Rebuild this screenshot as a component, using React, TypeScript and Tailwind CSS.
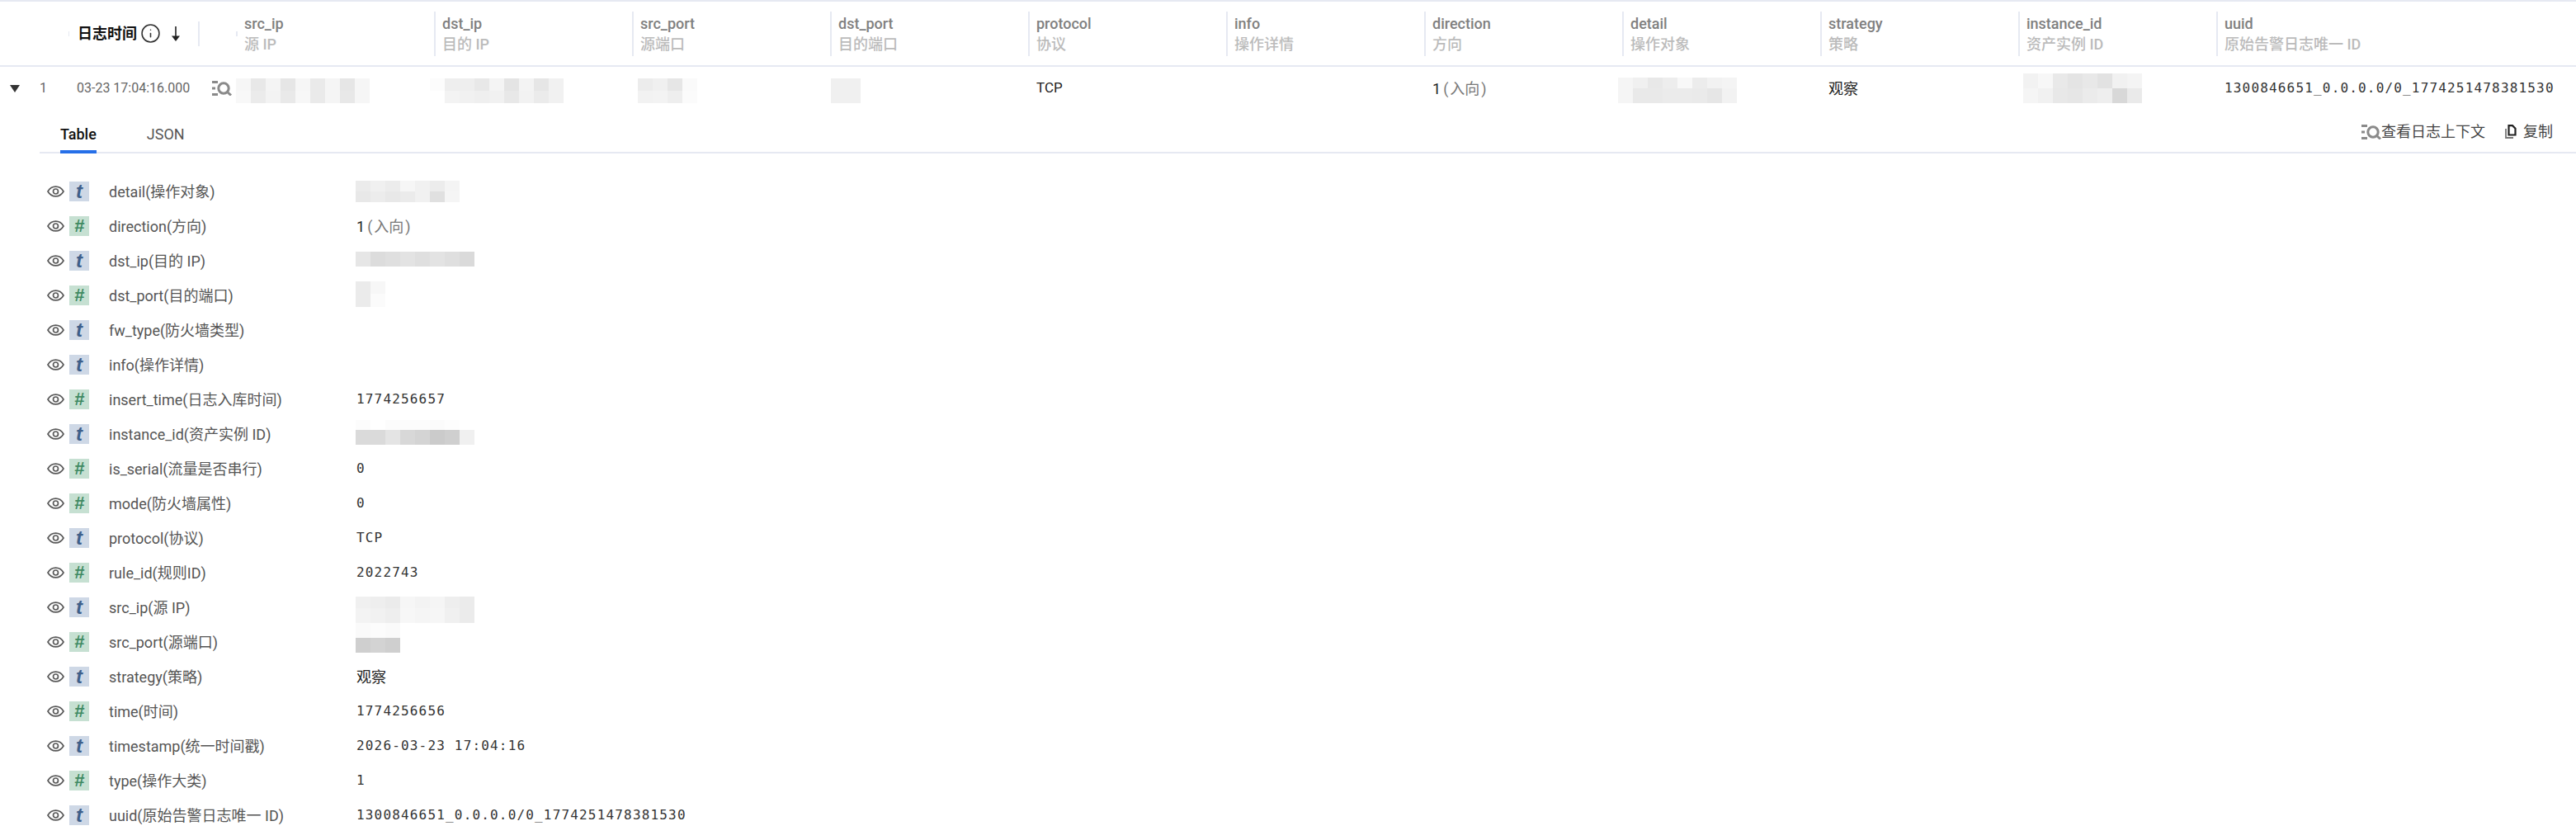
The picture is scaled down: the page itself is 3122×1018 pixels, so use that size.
import React from "react";
import { Info } from "lucide-react";

type MosaicRow = { h: number; c: string[] };

const columns = [
  { name: "src_ip", sub: "源 IP" },
  { name: "dst_ip", sub: "目的 IP" },
  { name: "src_port", sub: "源端口" },
  { name: "dst_port", sub: "目的端口" },
  { name: "protocol", sub: "协议" },
  { name: "info", sub: "操作详情" },
  { name: "direction", sub: "方向" },
  { name: "detail", sub: "操作对象" },
  { name: "strategy", sub: "策略" },
  { name: "instance_id", sub: "资产实例 ID" },
  { name: "uuid", sub: "原始告警日志唯一 ID" },
];

const rowMosaics: Record<string, { x: number; y: number; rows: MosaicRow[] }> = {
  src_ip: {
    x: 0,
    y: 14,
    rows: [
      { h: 15, c: ["#f6f6f6", "#e8e8e8", "#f4f4f4", "#e6e6e6", "#f6f6f6", "#eaeaea", "#f5f5f5", "#e6e6e6", "#f6f6f6"] },
      { h: 15, c: ["#f8f8f8", "#ebebeb", "#f3f3f3", "#e9e9e9", "#f7f7f7", "#eaeaea", "#f5f5f5", "#e8e8e8", "#f6f6f6"] },
    ],
  },
  dst_ip: {
    x: -5,
    y: 14,
    rows: [
      { h: 15, c: ["#fcfcfc", "#eeeeee", "#eeeeee", "#e8e8e8", "#f4f4f4", "#e4e4e4", "#f3f3f3", "#e6e6e6", "#f1f1f1"] },
      { h: 15, c: ["#ffffff", "#f3f3f3", "#f1f1f1", "#efefef", "#f1f1f1", "#e8e8e8", "#f2f2f2", "#ebebeb", "#f1f1f1"] },
    ],
  },
  src_port: {
    x: 7,
    y: 14,
    rows: [
      { h: 15, c: ["#ececec", "#f0f0f0", "#e6e6e6", "#fafafa"] },
      { h: 15, c: ["#f2f2f2", "#f3f3f3", "#eeeeee", "#fbfbfb"] },
    ],
  },
  dst_port: {
    x: 1,
    y: 14,
    rows: [{ h: 30, c: ["#f0f0f0", "#f0f0f0"] }],
  },
  detail: {
    x: -5,
    y: 13,
    rows: [
      { h: 13, c: ["#f5f5f5", "#f0f0f0", "#e8e8e8", "#ededed", "#f8f8f8", "#ececec", "#f2f2f2", "#f4f4f4"] },
      { h: 18, c: ["#f5f5f5", "#e9e9e9", "#e9e9e9", "#ebebeb", "#ebebeb", "#eaeaea", "#e6e6e6", "#f2f2f2"] },
    ],
  },
  instance_id: {
    x: 6,
    y: 8,
    rows: [
      { h: 18, c: ["#f2f2f2", "#f7f7f7", "#e9e9e9", "#e4e4e4", "#e8e8e8", "#e2e2e2", "#f1f1f1", "#f4f4f4"] },
      { h: 18, c: ["#f5f5f5", "#f1f1f1", "#e8e8e8", "#e6e6e6", "#ebebeb", "#eeeeee", "#d8d8d8", "#eaeaea"] },
    ],
  },
};

const rowValues: Record<string, React.ReactNode> = {
  protocol: <span className="text-[17px] text-[#222222]">TCP</span>,
  direction: <DirectionValue />,
  strategy: <span className="text-[18px] text-[#222222]">观察</span>,
  uuid: <span className="text-[16px] tracking-[1.17px] text-[#333333] [font-family:'DejaVu_Sans_Mono',monospace]">1300846651_0.0.0.0/0_1774251478381530</span>,
};

const fields: { name: string; kind: "t" | "#"; value?: string; mosaic?: { y: number; rows: MosaicRow[] } }[] = [
  {
    name: "detail(操作对象)",
    kind: "t",
    mosaic: {
      y: 8,
      rows: [
        { h: 13, c: ["#ebebeb", "#f0f0f0", "#ececec", "#f6f6f6", "#f1f1f1", "#ececec", "#f4f4f4"] },
        { h: 13, c: ["#e8e8e8", "#ececec", "#e8e8e8", "#ebebeb", "#f1f1f1", "#e0e0e0", "#f5f5f5"] },
      ],
    },
  },
  { name: "direction(方向)", kind: "#", value: "direction" },
  {
    name: "dst_ip(目的 IP)",
    kind: "t",
    mosaic: { y: 10, rows: [{ h: 18, c: ["#e6e6e6", "#dcdcdc", "#dfdfdf", "#e3e3e3", "#dfdfdf", "#e3e3e3", "#dfdfdf", "#dadada"] }] },
  },
  {
    name: "dst_port(目的端口)",
    kind: "#",
    mosaic: {
      y: 4,
      rows: [
        { h: 15, c: ["#ebebeb", "#f7f7f7"] },
        { h: 16, c: ["#ebebeb", "#fbfbfb"] },
      ],
    },
  },
  { name: "fw_type(防火墙类型)", kind: "t" },
  { name: "info(操作详情)", kind: "t" },
  { name: "insert_time(日志入库时间)", kind: "#", value: "1774256657" },
  {
    name: "instance_id(资产实例 ID)",
    kind: "t",
    mosaic: {
      y: 4,
      rows: [
        { h: 12, c: ["#fcfcfc", "#ffffff", "#fcfcfc", "#fcfcfc", "#fcfcfc", "#fbfbfb", "#fdfdfd", "#ffffff"] },
        { h: 18, c: ["#dadada", "#dadada", "#e4e4e4", "#d8d8d8", "#d4d4d4", "#cbcbcb", "#cfcfcf", "#f0f0f0"] },
      ],
    },
  },
  { name: "is_serial(流量是否串行)", kind: "#", value: "0" },
  { name: "mode(防火墙属性)", kind: "#", value: "0" },
  { name: "protocol(协议)", kind: "t", value: "TCP" },
  { name: "rule_id(规则ID)", kind: "#", value: "2022743" },
  {
    name: "src_ip(源 IP)",
    kind: "t",
    mosaic: {
      y: 8,
      rows: [
        { h: 14, c: ["#f0f0f0", "#eeeeee", "#ebebeb", "#f6f6f6", "#f3f3f3", "#f5f5f5", "#eeeeee", "#ebebeb"] },
        { h: 18, c: ["#f3f3f3", "#f1f1f1", "#eeeeee", "#f7f7f7", "#f5f5f5", "#f6f6f6", "#f0f0f0", "#ebebeb"] },
      ],
    },
  },
  {
    name: "src_port(源端口)",
    kind: "#",
    mosaic: {
      y: -2,
      rows: [
        { h: 18, c: ["#fafafa", "#fcfcfc", "#fafafa"] },
        { h: 18, c: ["#cfcfcf", "#d3d3d3", "#cfcfcf"] },
      ],
    },
  },
  { name: "strategy(策略)", kind: "t", value: "观察" },
  { name: "time(时间)", kind: "#", value: "1774256656" },
  { name: "timestamp(统一时间戳)", kind: "t", value: "2026-03-23 17:04:16" },
  { name: "type(操作大类)", kind: "#", value: "1" },
  { name: "uuid(原始告警日志唯一 ID)", kind: "t", value: "1300846651_0.0.0.0/0_1774251478381530" },
];

function DirectionValue() {
  return (
    <span className="text-[18px] text-[#222222]">
      1
      <span className="ml-[3px] text-[#777777]">(</span>
      <span className="mx-[2px] text-[#777777]">入向</span>
      <span className="text-[#777777]">)</span>
    </span>
  );
}

function Mosaic({ rows, x = 0, y = 0 }: { rows: MosaicRow[]; x?: number; y?: number }) {
  return (
    <div className="flex flex-col shrink-0" style={{ marginLeft: x, marginTop: y }}>
      {rows.map((r, i) => (
        <div key={i} className="flex" style={{ height: r.h }}>
          {r.c.map((c, j) => (
            <div key={j} className="w-[18px] h-full" style={{ backgroundColor: c }} />
          ))}
        </div>
      ))}
    </div>
  );
}

function ContextIcon({ className }: { className?: string }) {
  return (
    <svg className={className} viewBox="0 0 24 18" fill="none">
      <path d="M0 1.500h7M0 9h4M0 16.500h7" stroke="#8a8a8a" strokeWidth="3" />
      <circle cx="14" cy="9" r="6.200" stroke="#8a8a8a" strokeWidth="3" />
      <path d="M18.500 13.500l4.500 4" stroke="#8a8a8a" strokeWidth="3" />
    </svg>
  );
}

function CopyIcon() {
  return (
    <svg className="w-[14px] h-[17px] shrink-0" viewBox="0 0 14 17" fill="none">
      <path d="M1 5v11h9" stroke="#777777" strokeWidth="1.800" />
      <path d="M4.500 1.200h4.500l3.500 3.500v7.800h-8z" stroke="#222222" strokeWidth="2.200" />
    </svg>
  );
}

function EyeIcon() {
  return (
    <svg className="w-[21px] h-[14px] shrink-0" viewBox="0 0 21 14" fill="none">
      <path d="M1 7c2.300-3.900 5.500-5.900 9.500-5.900s7.200 2 9.500 5.900c-2.300 3.900-5.500 5.900-9.500 5.900s-7.200-2-9.500-5.900z" stroke="#5a5a5a" strokeWidth="1.700" />
      <circle cx="10.500" cy="7" r="3" stroke="#5a5a5a" strokeWidth="1.700" />
    </svg>
  );
}

function TypeBadge({ kind }: { kind: "t" | "#" }) {
  if (kind === "t") {
    return (
      <span className="w-[24px] h-[24px] shrink-0 flex items-center justify-center bg-[#ced8e6] text-[#3f5f8a] text-[24px] leading-none font-bold italic [font-family:'Liberation_Sans',sans-serif]">
        t
      </span>
    );
  }
  return (
    <span className="w-[24px] h-[24px] shrink-0 flex items-center justify-center bg-[#c6e0d2] text-[#3f8a62] text-[22px] leading-none font-bold italic [font-family:'Liberation_Sans',sans-serif]">
      #
    </span>
  );
}

function FieldValue({ field }: { field: (typeof fields)[number] }) {
  if (field.mosaic) {
    return <Mosaic rows={field.mosaic.rows} x={-1} y={field.mosaic.y} />;
  }
  if (field.value === "direction") {
    return (
      <div className="h-full flex items-center">
        <DirectionValue />
      </div>
    );
  }
  if (field.value === "观察") {
    return (
      <div className="h-full flex items-center text-[18px] text-[#222222]">观察</div>
    );
  }
  return (
    <div className="h-full flex items-center text-[16px] tracking-[1.17px] text-[#333333] [font-family:'DejaVu_Sans_Mono',monospace]">
      {field.value}
    </div>
  );
}

export default function App() {
  return (
    <div className="w-[3122px] h-[1018px] overflow-hidden bg-white border-t-2 border-[#e6e9f2] [font-family:Roboto,'Noto_Sans_CJK_SC',sans-serif]">
      {/* header */}
      <div className="flex items-center h-[79px] border-b-2 border-[#e6e9f2]">
        <div className="w-[84px] shrink-0 flex justify-end">
          <div className="w-[1px] h-[6px] bg-[#e6e9f2]" />
        </div>
        <div className="w-[202px] shrink-0 flex items-center">
          <span className="ml-[10px] text-[18px] font-bold text-[#111111]">日志时间</span>
          <Info className="ml-[4px] text-[#333333]" size={25} strokeWidth={1.5} />
          <svg className="ml-[12px] w-[12px] h-[18px]" viewBox="0 0 12 18" fill="none">
            <path d="M6 0v13" stroke="#222222" strokeWidth="1.600" />
            <path d="M1 11.500h10L6 18z" fill="#222222" />
          </svg>
          <div className="ml-[21px] w-[2px] h-[30px] bg-[#e6e9f2]" />
        </div>
        {columns.map((col, i) => (
          <div key={col.name} className="w-[240px] shrink-0 flex items-center">
            {i === 0 ? (
              <div className="w-[2px] h-[6px] bg-[#e6e9f2]" />
            ) : (
              <div className="w-[2px] h-[54px] bg-[#e6e9f2]" />
            )}
            <div className="ml-[8px] flex flex-col leading-[25px] text-[18px] font-medium">
              <span className="text-[#808080]">{col.name}</span>
              <span className="text-[#bbbbbb]">{col.sub}</span>
            </div>
          </div>
        ))}
      </div>

      {/* log row */}
      <div className="flex h-[52px]">
        <div className="w-[286px] shrink-0 flex items-center">
          <svg className="ml-[12px] w-[12px] h-[9px]" viewBox="0 0 12 9">
            <path d="M0 0h12L6 9z" fill="#333333" />
          </svg>
          <span className="ml-[24px] w-[45px] text-[16px] text-[#666666]">1</span>
          <span className="text-[16px] text-[#666666] w-[164px] shrink-0">03-23 17:04:16.000</span>
          <ContextIcon className="w-[24px] h-[18px] shrink-0" />
        </div>
        {columns.map((col) => {
          const m = rowMosaics[col.name];
          return (
            <div key={col.name} className="w-[240px] shrink-0 flex items-start">
              {m ? (
                <Mosaic rows={m.rows} x={m.x} y={m.y} />
              ) : (
                <div className="pl-[10px] h-[52px] flex items-center">{rowValues[col.name]}</div>
              )}
            </div>
          );
        })}
      </div>

      {/* tabs */}
      <div className="ml-[48px] h-[53px] flex items-end justify-between border-b-2 border-[#e6e9f2]">
        <div className="flex items-end gap-[61px] pl-[25px]">
          <span className="h-[49px] -mb-[2px] pb-[6px] flex items-end border-b-4 border-[#266fe8] text-[18px] font-medium text-[#111111]">
            Table
          </span>
          <span className="h-[49px] -mb-[2px] pb-[10px] flex items-end text-[18px] text-[#555555]">JSON</span>
        </div>
        <div className="flex items-center pr-[28px] h-[49px] text-[18px] text-[#444444]">
          <ContextIcon className="w-[24px] h-[18px] shrink-0" />
          <span>查看日志上下文</span>
          <div className="ml-[24px]">
            <CopyIcon />
          </div>
          <span className="ml-[8px]">复制</span>
        </div>
      </div>

      {/* fields */}
      <div className="pt-[25px]">
        {fields.map((f) => (
          <div key={f.name} className="flex h-[42px]">
            <div className="w-[432px] shrink-0 flex items-center">
              <div className="ml-[57px]">
                <EyeIcon />
              </div>
              <div className="ml-[6px]">
                <TypeBadge kind={f.kind} />
              </div>
              <span className="ml-[24px] text-[18px] text-[#555555] whitespace-nowrap">{f.name}</span>
            </div>
            <FieldValue field={f} />
          </div>
        ))}
      </div>
    </div>
  );
}
